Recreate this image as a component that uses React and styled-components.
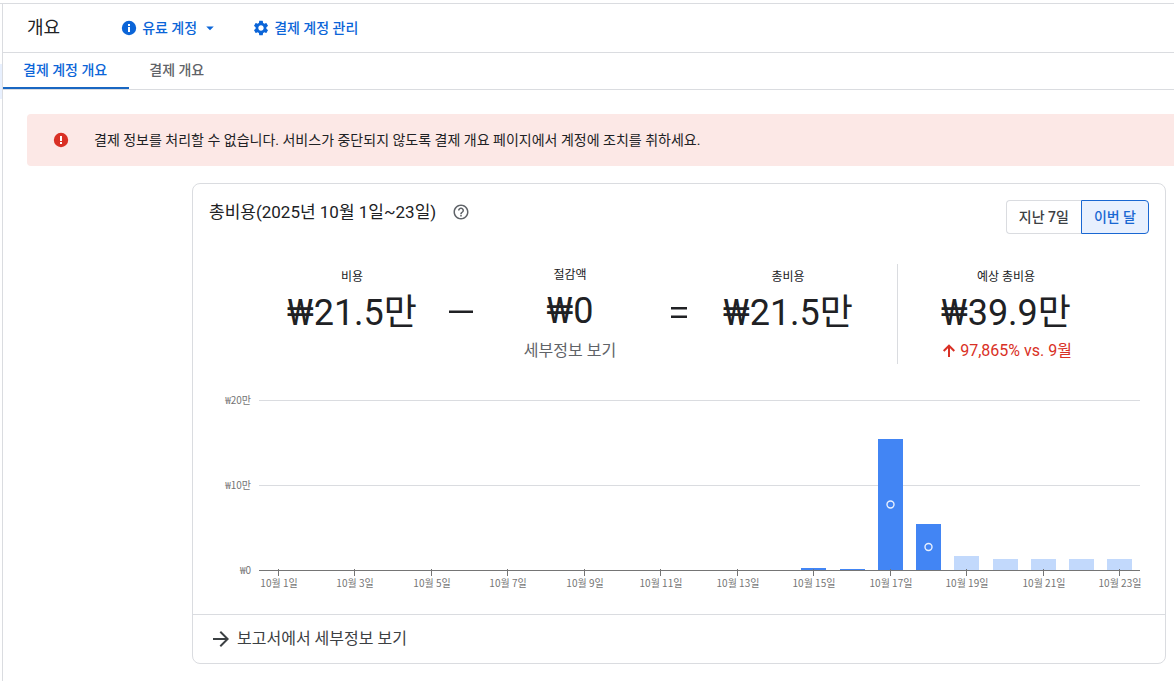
import { useState } from "react";
import styled, { createGlobalStyle } from "styled-components";
import {
  MdArrowDropDown,
  MdArrowForward,
  MdHelpOutline,
  MdSettings,
} from "react-icons/md";

const GlobalStyle = createGlobalStyle`
  * {
    box-sizing: border-box;
  }
  body {
    margin: 0;
    background: #fff;
    color: #202124;
    font-family: Roboto, "Noto Sans CJK KR", sans-serif;
    font-size: 14px;
    line-height: 20px;
  }
  button {
    font-family: inherit;
  }
`;

const Page = styled.div`
  display: flex;
  min-height: 100vh;
  padding-top: 3px;
`;

const Rail = styled.div`
  width: 2px;
  padding-top: 60px;
  border-top: 1px solid #dadce0;
`;

const RailActive = styled.div`
  height: 35px;
  background: #e8f0fe;
`;

const Content = styled.div`
  flex: 1;
  min-width: 0;
  border-top: 1px solid #dadce0;
  border-left: 1px solid #dadce0;
`;

const Header = styled.header`
  display: flex;
  align-items: center;
  height: 49px;
  padding-left: 24px;
  border-bottom: 1px solid #dadce0;
`;

const PageTitle = styled.h1`
  margin: 0 60px 0 0;
  font-size: 18px;
  line-height: 24px;
  font-weight: 400;
`;

const HeaderButton = styled.button`
  display: flex;
  align-items: center;
  gap: 4px;
  margin-right: 33px;
  padding: 0 0 1px;
  border: none;
  background: none;
  color: #0b65d8;
  font-size: 14px;
  line-height: 20px;
  font-weight: 500;
  cursor: pointer;
`;

const Tabs = styled.nav`
  display: flex;
  height: 37px;
  border-bottom: 1px solid #dadce0;
`;

const Tab = styled.a`
  padding: 7px 22px 7px 20px;
  border-bottom: 2px solid ${(props) => (props.$active ? "#1967c2" : "transparent")};
  color: ${(props) => (props.$active ? "#0b65d8" : "#5f6368")};
  font-weight: 500;
  text-decoration: none;
`;

const Main = styled.main`
  padding: 24px 0 16px 24px;
`;

const Alert = styled.div`
  display: flex;
  align-items: center;
  gap: 24px;
  height: 52px;
  padding: 0 25px;
  border-radius: 4px 0 0 4px;
  background: #fce8e6;
`;

const Card = styled.section`
  margin: 17px 8px 0 165px;
  border: 1px solid #dadce0;
  border-radius: 8px;
`;

const CardHeader = styled.div`
  display: flex;
  align-items: flex-start;
  justify-content: space-between;
  padding: 16px 16px 0;
`;

const CardTitle = styled.h2`
  display: flex;
  align-items: center;
  gap: 16px;
  margin: 0;
  font-size: 17px;
  line-height: 24px;
  font-weight: 400;
`;

const HelpButton = styled.button`
  display: flex;
  padding: 0;
  border: none;
  background: none;
  color: #5f6368;
  cursor: pointer;
`;

const Toggle = styled.div`
  display: flex;
`;

const ToggleButton = styled.button`
  height: 34px;
  padding: 0 12px 2px;
  border: 1px solid ${(props) => (props.$active ? "#1967d2" : "#dadce0")};
  background: ${(props) => (props.$active ? "#e8f0fe" : "#fff")};
  color: ${(props) => (props.$active ? "#1967d2" : "#3c4043")};
  font-size: 14px;
  font-weight: 500;
  cursor: pointer;

  &:first-child {
    border-right-width: ${(props) => (props.$active ? "1px" : "0")};
    border-radius: 4px 0 0 4px;
  }
  &:last-child {
    border-left-width: ${(props) => (props.$active ? "1px" : "0")};
    border-radius: 0 4px 4px 0;
  }
`;

const Metrics = styled.div`
  display: grid;
  grid-template-columns: 1fr 24px 1fr 24px 1fr 24px 1fr;
  grid-template-rows: 100px;
  align-items: center;
  justify-items: center;
  margin: 30px 62px 0;
`;

const Metric = styled.div`
  display: flex;
  flex-direction: column;
  align-items: center;
  padding-top: 2px;
  white-space: nowrap;
`;

const MetricLabel = styled.div`
  font-size: 12px;
  line-height: 20px;
`;

const MetricValue = styled.div`
  font-size: 36px;
  line-height: 52px;
`;

const MetricNote = styled.div`
  display: flex;
  align-items: center;
  gap: 2px;
  min-height: 24px;
  color: #d93025;
  font-size: 16px;
  line-height: 24px;
`;

const DetailLink = styled.a`
  padding: 2px 0;
  color: #5f6368;
  font-size: 16px;
  line-height: 24px;
  text-decoration: none;
`;

const Operator = styled.svg`
  width: 24px;
  height: 24px;
  fill: #202124;
`;

const Divider = styled.div`
  width: 1px;
  height: 100%;
  background: #dadce0;
`;

const ChartBox = styled.div`
  padding: 16px 16px 0;
`;

const ChartSvg = styled.svg`
  display: block;
  width: 100%;
  height: auto;

  text {
    fill: #757575;
    font-family: "Noto Sans CJK KR", sans-serif;
    font-size: 10px;
  }
`;

const CardFooter = styled.div`
  padding: 12px 16px;
  border-top: 1px solid #dadce0;
`;

const ReportLink = styled.a`
  display: flex;
  align-items: center;
  gap: 4px;
  color: #3c4043;
  font-size: 16px;
  line-height: 24px;
  text-decoration: none;
`;

const InfoIcon = () => (
  <svg width="18" height="18" viewBox="0 0 18 18" aria-hidden="true">
    <circle cx="9" cy="9" r="7.2" fill="currentColor" />
    <path d="M8 5h2v2H8zM8 8h2v5H8z" fill="#fff" />
  </svg>
);

const ErrorIcon = () => (
  <svg width="18" height="18" viewBox="0 0 18 18" aria-hidden="true">
    <circle cx="9" cy="9" r="7.2" fill="#d93025" />
    <path d="M8 5h2v5H8zM8 11h2v2H8z" fill="#fff" />
  </svg>
);

const UpIcon = () => (
  <svg width="18" height="18" viewBox="0 0 18 18" aria-hidden="true">
    <path
      d="M9 15V4M3.7 9 9 3.7 14.3 9"
      fill="none"
      stroke="currentColor"
      strokeWidth="2"
    />
  </svg>
);

// daily cost in units of 10,000 won
const costs = [
  0, 0, 0, 0, 0, 0, 0, 0, 0, 0, 0, 0, 0, 0, 0.25, 0.12, 15.4, 5.4, 1.7, 1.35,
  1.35, 1.35, 1.35,
];
const FORECAST_FROM = 18;
const ANOMALIES = [16, 17];

const LEFT = 50;
const RIGHT = 931;
const BASE = 190;
const SCALE = 170 / 20;
const STEP = (RIGHT - LEFT - 1) / costs.length;

const CostChart = () => (
  <ChartSvg viewBox="0 0 940 234" role="img" aria-label="일별 비용">
    {[20, 10, 0].map((tick) => {
      const y = BASE - tick * SCALE;
      return (
        <g key={tick}>
          {tick > 0 && (
            <rect x={LEFT} y={y} width={RIGHT - LEFT} height="1" fill="#dadce0" />
          )}
          <text x="42" y={y + 4} textAnchor="end">
            {tick > 0 ? `₩${tick}만` : "₩0"}
          </text>
        </g>
      );
    })}
    <rect x={LEFT} y={BASE} width={RIGHT - LEFT} height="1" fill="#757575" />
    {costs.map((cost, i) => {
      const center = Math.floor(LEFT + STEP * (i + 0.5));
      const height = Math.round(cost * SCALE);
      return (
        <g key={i}>
          {cost > 0 && (
            <rect
              x={center - 12}
              y={BASE - height}
              width="25"
              height={height}
              fill={i >= FORECAST_FROM ? "#c2d9fc" : "#4285f4"}
            />
          )}
          {ANOMALIES.includes(i) && (
            <circle
              cx={center + 0.5}
              cy={BASE - height / 2}
              r="3.5"
              fill="none"
              stroke="#e8f0fe"
              strokeWidth="1.4"
            />
          )}
          {i % 2 === 0 && (
            <>
              <rect x={center} y={BASE - 1} width="1" height="7" fill="#757575" />
              <text x={center + 1} y={BASE + 17} textAnchor="middle">
                10월 {i + 1}일
              </text>
            </>
          )}
        </g>
      );
    })}
  </ChartSvg>
);

const App = () => {
  const [range, setRange] = useState("month");

  return (
    <>
      <GlobalStyle />
      <Page>
        <Rail>
          <RailActive />
        </Rail>
        <Content>
          <Header>
            <PageTitle>개요</PageTitle>
            <HeaderButton>
              <InfoIcon />
              유료 계정
              <MdArrowDropDown size={18} />
            </HeaderButton>
            <HeaderButton>
              <MdSettings size={18} />
              결제 계정 관리
            </HeaderButton>
          </Header>
          <Tabs>
            <Tab href="#account" $active>
              결제 계정 개요
            </Tab>
            <Tab href="#billing">결제 개요</Tab>
          </Tabs>
          <Main>
            <Alert role="alert">
              <ErrorIcon />
              결제 정보를 처리할 수 없습니다. 서비스가 중단되지 않도록 결제 개요
              페이지에서 계정에 조치를 취하세요.
            </Alert>
            <Card>
              <CardHeader>
                <CardTitle>
                  총비용(2025년 10월 1일~23일)
                  <HelpButton aria-label="도움말">
                    <MdHelpOutline size={18} />
                  </HelpButton>
                </CardTitle>
                <Toggle>
                  <ToggleButton
                    $active={range === "week"}
                    onClick={() => setRange("week")}
                  >
                    지난 7일
                  </ToggleButton>
                  <ToggleButton
                    $active={range === "month"}
                    onClick={() => setRange("month")}
                  >
                    이번 달
                  </ToggleButton>
                </Toggle>
              </CardHeader>
              <Metrics>
                <Metric>
                  <MetricLabel>비용</MetricLabel>
                  <MetricValue>₩21.5만</MetricValue>
                  <MetricNote />
                </Metric>
                <Operator viewBox="0 0 24 24">
                  <rect x="0" y="8.5" width="24" height="2.5" />
                </Operator>
                <Metric>
                  <MetricLabel>절감액</MetricLabel>
                  <MetricValue>₩0</MetricValue>
                  <DetailLink href="#savings">세부정보 보기</DetailLink>
                </Metric>
                <Operator viewBox="0 0 24 24">
                  <rect x="4" y="5" width="16" height="2.5" />
                  <rect x="4" y="13.5" width="16" height="2.5" />
                </Operator>
                <Metric>
                  <MetricLabel>총비용</MetricLabel>
                  <MetricValue>₩21.5만</MetricValue>
                  <MetricNote />
                </Metric>
                <Divider />
                <Metric>
                  <MetricLabel>예상 총비용</MetricLabel>
                  <MetricValue>₩39.9만</MetricValue>
                  <MetricNote>
                    <UpIcon />
                    97,865% vs. 9월
                  </MetricNote>
                </Metric>
              </Metrics>
              <ChartBox>
                <CostChart />
              </ChartBox>
              <CardFooter>
                <ReportLink href="#reports">
                  <MdArrowForward size={24} />
                  보고서에서 세부정보 보기
                </ReportLink>
              </CardFooter>
            </Card>
          </Main>
        </Content>
      </Page>
    </>
  );
};

export default App;
